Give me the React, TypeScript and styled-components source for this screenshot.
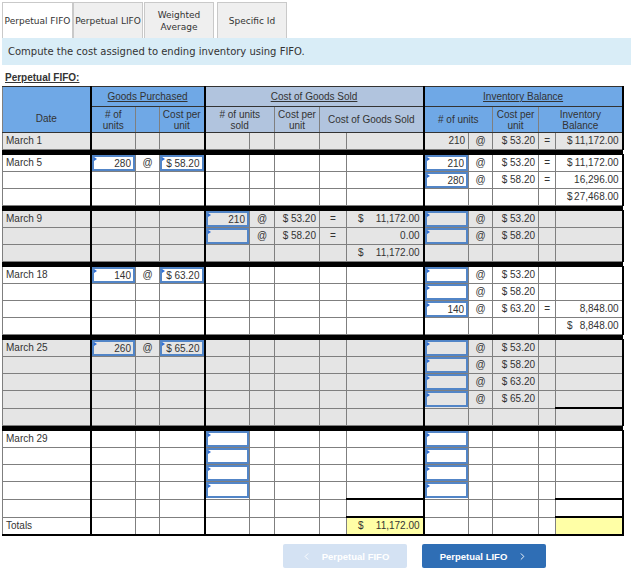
import { Fragment, ReactElement, ReactNode } from 'react';
import styled, { createGlobalStyle } from 'styled-components';
import { ChevronLeft, ChevronRight } from 'lucide-react';

const GlobalStyle = createGlobalStyle`
  body {
    margin: 0;
    background: #fff;
    font-family: 'Liberation Sans', Arial, sans-serif;
    color: #333;
  }
`;

const Page = styled.div`
  padding: 2px 0 0 2px;
`;

const Tabs = styled.div`
  display: flex;
  height: 36px;
`;

const Tab = styled.div<{ $active?: boolean; $w: number; $gap?: number }>`
  width: ${(p) => p.$w}px;
  margin-left: ${(p) => p.$gap ?? 0}px;
  box-sizing: border-box;
  border: 1px solid #c9c9c9;
  border-bottom: none;
  background: ${(p) => (p.$active ? '#fff' : '#efefef')};
  display: flex;
  align-items: center;
  justify-content: center;
  text-align: center;
  font-family: 'DejaVu Sans', Verdana, sans-serif;
  font-size: 9px;
  line-height: 12px;
  color: #333;
  white-space: nowrap;
`;

const Prompt = styled.div`
  height: 27px;
  background: #d9edf7;
  padding-left: 6px;
  font: 10px/27px 'DejaVu Sans', Verdana, sans-serif;
  color: #333;
`;

const SectionLabel = styled.div`
  margin-top: 5px;
  padding-left: 3px;
  font: bold 10px/16px 'Liberation Sans', Arial, sans-serif;
  text-decoration: underline;
  color: #333;
`;

const Sheet = styled.table`
  border-collapse: collapse;
  table-layout: fixed;
  width: 620px;
  font-size: 10px;
  color: #333;
`;

const HeadRow = styled.tr<{ $h: number }>`
  height: ${(p) => p.$h}px;
`;

const Head = styled.th<{ $tone: 'blue' | 'slate'; $edge?: boolean; $last?: boolean; $under?: boolean; $bottom?: boolean }>`
  background: ${(p) => (p.$tone === 'blue' ? '#6fa8e6' : '#b1c4de')};
  border: 1px solid #7f7f7f;
  border-top-color: #333;
  border-bottom-color: #333;
  ${(p) => p.$edge && 'border-left: 2px solid #000;'}
  ${(p) => p.$last && 'border-right: 2px solid #000;'}
  font-weight: normal;
  padding: 0 2px;
  line-height: 11px;
  text-decoration: ${(p) => (p.$under ? 'underline' : 'none')};
  vertical-align: ${(p) => (p.$bottom ? 'bottom' : 'middle')};
  padding-bottom: ${(p) => (p.$bottom ? '8px' : '0')};
`;

const Cell = styled.td<{
  $shade?: boolean;
  $align: string;
  $edge?: boolean;
  $last?: boolean;
  $rule?: boolean;
  $yellow?: boolean;
  $flush?: boolean;
}>`
  height: 16px;
  padding: ${(p) => (p.$flush ? '0' : '0 3px')};
  line-height: 16px;
  border: 1px solid #7f7f7f;
  ${(p) => p.$edge && 'border-left: 2px solid #000;'}
  ${(p) => p.$last && 'border-right: 2px solid #000;'}
  ${(p) => p.$rule && 'border-top: 2px solid #000;'}
  background: ${(p) => (p.$yellow ? '#ffffa6' : p.$shade ? '#e5e5e5' : '#fff')};
  text-align: ${(p) => p.$align};
  white-space: nowrap;
  overflow: hidden;
  vertical-align: middle;
`;

const Divider = styled.td`
  height: 4px;
  padding: 0;
  background: #000;
  border: 1px solid #000;
`;

const BottomRow = styled.tr`
  td {
    border-bottom: 2px solid #000;
  }
`;

const Money = styled.span`
  display: flex;
  justify-content: space-between;
  padding-left: 8px;
`;

const EntryWrap = styled.div`
  position: relative;
  height: 16px;

  &::before {
    content: '';
    position: absolute;
    left: 2px;
    top: 2px;
    border-top: 2px solid transparent;
    border-bottom: 2px solid transparent;
    border-left: 3px solid #2f6fd6;
  }
`;

const Entry = styled.input`
  display: block;
  box-sizing: border-box;
  width: 100%;
  height: 16px;
  margin: 0;
  border: 2px solid #5285c7;
  background: transparent;
  padding: 0 2px;
  font: 10px 'Liberation Sans', Arial, sans-serif;
  color: #333;
  text-align: right;
  outline: none;
`;

const Nav = styled.div`
  display: flex;
  gap: 15px;
  padding: 8px 0 0 281px;
`;

const NavButton = styled.button<{ $off?: boolean }>`
  width: 124px;
  height: 24px;
  border: none;
  border-radius: 2px;
  background: ${(p) => (p.$off ? '#d4e2f3' : '#2f6eb5')};
  color: #fff;
  font: bold 9.5px 'Liberation Sans', Arial, sans-serif;
  display: flex;
  align-items: center;
  justify-content: center;
  gap: 10px;
  padding: 0;
`;

type CellSpec = string | { input: string } | { money: string };

interface SheetRow {
  cells: Record<number, CellSpec>;
  rule?: number[];
  yellow?: number[];
}

interface Group {
  shade: boolean;
  rows: SheetRow[];
}

const inp = (v = ''): CellSpec => ({ input: v });
const usd = (v: string): CellSpec => ({ money: v });

const columns = [
  { w: 88, align: 'left' },
  { w: 45, align: 'right', edge: true },
  { w: 24, align: 'center' },
  { w: 45, align: 'right' },
  { w: 45, align: 'right', edge: true },
  { w: 25, align: 'center' },
  { w: 45, align: 'right' },
  { w: 27, align: 'center' },
  { w: 77, align: 'right' },
  { w: 45, align: 'right', edge: true },
  { w: 24, align: 'center' },
  { w: 46, align: 'right' },
  { w: 17, align: 'center' },
  { w: 67, align: 'right', last: true },
];

const groups: Group[] = [
  {
    shade: true,
    rows: [{ cells: { 0: 'March 1', 9: '210', 10: '@', 11: '$ 53.20', 12: '=', 13: usd('11,172.00') } }],
  },
  {
    shade: false,
    rows: [
      {
        cells: {
          0: 'March 5',
          1: inp('280'),
          2: '@',
          3: inp('$ 58.20'),
          9: inp('210'),
          10: '@',
          11: '$ 53.20',
          12: '=',
          13: usd('11,172.00'),
        },
      },
      { cells: { 9: inp('280'), 10: '@', 11: '$ 58.20', 12: '=', 13: '16,296.00' } },
      { cells: { 13: usd('27,468.00') } },
    ],
  },
  {
    shade: true,
    rows: [
      {
        cells: {
          0: 'March 9',
          4: inp('210'),
          5: '@',
          6: '$ 53.20',
          7: '=',
          8: usd('11,172.00'),
          9: inp(),
          10: '@',
          11: '$ 53.20',
        },
      },
      { cells: { 4: inp(), 5: '@', 6: '$ 58.20', 7: '=', 8: '0.00', 9: inp(), 10: '@', 11: '$ 58.20' } },
      { cells: { 8: usd('11,172.00') } },
    ],
  },
  {
    shade: false,
    rows: [
      { cells: { 0: 'March 18', 1: inp('140'), 2: '@', 3: inp('$ 63.20'), 9: inp(), 10: '@', 11: '$ 53.20' } },
      { cells: { 9: inp(), 10: '@', 11: '$ 58.20' } },
      { cells: { 9: inp('140'), 10: '@', 11: '$ 63.20', 12: '=', 13: '8,848.00' } },
      { cells: { 13: usd('8,848.00') } },
    ],
  },
  {
    shade: true,
    rows: [
      { cells: { 0: 'March 25', 1: inp('260'), 2: '@', 3: inp('$ 65.20'), 9: inp(), 10: '@', 11: '$ 53.20' } },
      { cells: { 9: inp(), 10: '@', 11: '$ 58.20' } },
      { cells: { 9: inp(), 10: '@', 11: '$ 63.20' } },
      { cells: { 9: inp(), 10: '@', 11: '$ 65.20' } },
      { cells: {}, rule: [13] },
    ],
  },
  {
    shade: false,
    rows: [
      { cells: { 0: 'March 29', 4: inp(), 9: inp() } },
      { cells: { 4: inp(), 9: inp() } },
      { cells: { 4: inp(), 9: inp() } },
      { cells: { 4: inp(), 9: inp() } },
      { cells: {}, rule: [8, 13] },
    ],
  },
];

const totals: SheetRow = { cells: { 0: 'Totals', 8: usd('11,172.00') }, rule: [8, 13], yellow: [8, 13] };

const tabs: { label: ReactNode; w: number; gap?: number; active?: boolean }[] = [
  { label: 'Perpetual FIFO', w: 71, active: true },
  { label: 'Perpetual LIFO', w: 70 },
  {
    label: (
      <>
        Weighted
        <br />
        Average
      </>
    ),
    w: 70,
    gap: 1,
  },
  { label: 'Specific Id', w: 70, gap: 3 },
];

function renderSpec(spec: CellSpec | undefined): ReactNode {
  if (spec === undefined) return null;
  if (typeof spec === 'string') return spec;
  if ('input' in spec) {
    return (
      <EntryWrap>
        <Entry readOnly value={spec.input} />
      </EntryWrap>
    );
  }
  return (
    <Money>
      <span>$</span>
      <span>{spec.money}</span>
    </Money>
  );
}

function renderRow(row: SheetRow, shade: boolean, key: string): ReactElement[] {
  return columns.map((col, ci) => {
    const spec = row.cells[ci];
    const isInput = typeof spec === 'object' && 'input' in spec;
    return (
      <Cell
        key={`${key}-${ci}`}
        $shade={shade}
        $align={col.align}
        $edge={col.edge}
        $last={col.last}
        $rule={row.rule?.includes(ci)}
        $yellow={row.yellow?.includes(ci)}
        $flush={isInput}
      >
        {renderSpec(spec)}
      </Cell>
    );
  });
}

function App(): ReactElement {
  return (
    <Page>
      <GlobalStyle />
      <Tabs>
        {tabs.map((t, i) => (
          <Tab key={i} $w={t.w} $gap={t.gap} $active={t.active}>
            <span>{t.label}</span>
          </Tab>
        ))}
      </Tabs>
      <Prompt>Compute the cost assigned to ending inventory using FIFO.</Prompt>
      <SectionLabel>Perpetual FIFO:</SectionLabel>

      <Sheet>
        <colgroup>
          {columns.map((c, i) => (
            <col key={i} style={{ width: c.w }} />
          ))}
        </colgroup>
        <thead>
          <HeadRow $h={20}>
            <Head $tone="blue" rowSpan={2} $bottom>
              Date
            </Head>
            <Head $tone="blue" colSpan={3} $edge $under>
              Goods Purchased
            </Head>
            <Head $tone="slate" colSpan={5} $edge $under>
              Cost of Goods Sold
            </Head>
            <Head $tone="blue" colSpan={5} $edge $last $under>
              Inventory Balance
            </Head>
          </HeadRow>
          <HeadRow $h={26}>
            <Head $tone="blue" $edge>
              # of
              <br />
              units
            </Head>
            <Head $tone="blue" />
            <Head $tone="blue">
              Cost per
              <br />
              unit
            </Head>
            <Head $tone="slate" colSpan={2} $edge>
              # of units
              <br />
              sold
            </Head>
            <Head $tone="slate">
              Cost per
              <br />
              unit
            </Head>
            <Head $tone="slate" colSpan={2}>
              Cost of Goods Sold
            </Head>
            <Head $tone="blue" colSpan={2} $edge>
              # of units
            </Head>
            <Head $tone="blue">
              Cost per
              <br />
              unit
            </Head>
            <Head $tone="blue" colSpan={2} $last>
              Inventory
              <br />
              Balance
            </Head>
          </HeadRow>
        </thead>
        <tbody>
          {groups.map((g, gi) => (
            <Fragment key={gi}>
              {gi > 0 && (
                <tr>
                  <Divider colSpan={14} />
                </tr>
              )}
              {g.rows.map((row, ri) => (
                <tr key={ri}>{renderRow(row, g.shade, `${gi}-${ri}`)}</tr>
              ))}
            </Fragment>
          ))}
          <BottomRow>{renderRow(totals, false, 'totals')}</BottomRow>
        </tbody>
      </Sheet>

      <Nav>
        <NavButton $off>
          <ChevronLeft size={11} strokeWidth={2} />
          Perpetual FIFO
        </NavButton>
        <NavButton>
          Perpetual LIFO
          <ChevronRight size={11} strokeWidth={2} />
        </NavButton>
      </Nav>
    </Page>
  );
}

export default App;
